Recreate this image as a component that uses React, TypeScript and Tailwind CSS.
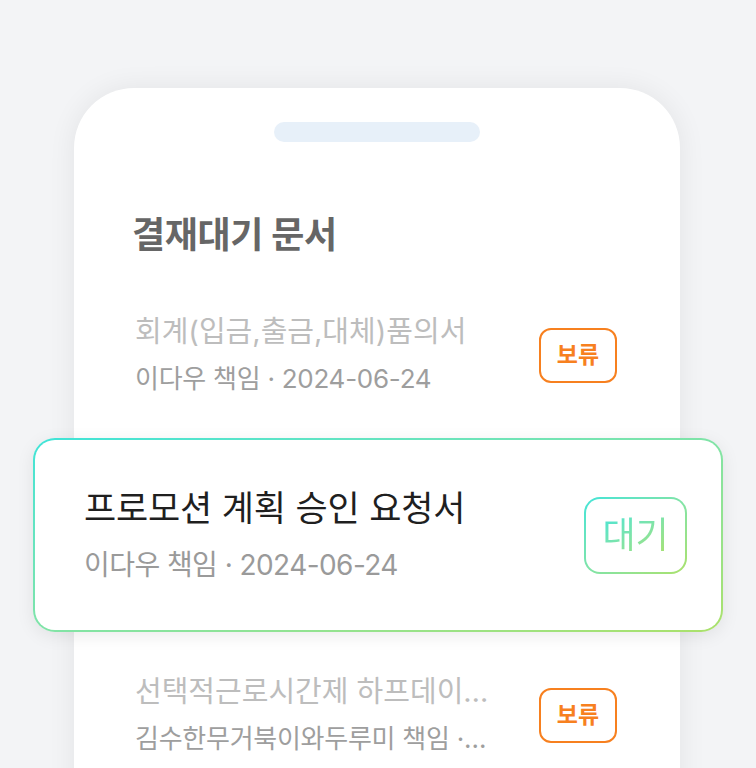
import React from "react";

type Doc = {
  title: string;
  meta: string;
};

const rows: Doc[] = [
  { title: "회계(입금,출금,대체)품의서", meta: "이다우 책임 · 2024-06-24" },
  { title: "프로모션 계획 승인 요청서", meta: "이다우 책임 · 2024-06-24" },
  { title: "선택적근로시간제 하프데이오프 신청서", meta: "김수한무거북이와두루미 책임 · 2024-06-24" },
];

const font = { fontFamily: 'Inter, "Noto Sans CJK KR", sans-serif' };

function HoldBadge() {
  return (
    <div className="flex h-[55px] w-[78px] shrink-0 items-center justify-center rounded-[12px] border-2 border-[#f7801f] text-[23px] font-bold text-[#f7801f]">
      보류
    </div>
  );
}

export default function App() {
  return (
    <div className="h-[768px] w-full overflow-hidden bg-[#f3f4f6]" style={font}>
      <div className="relative ml-[74px] mt-[88px] w-[606px] rounded-t-[60px] bg-white pb-10 shadow-[0_0_28px_rgba(0,0,0,0.07)]">
        <div className="flex justify-center pt-[34px]">
          <div className="h-[20px] w-[206px] rounded-full bg-[#e7f0f9]" />
        </div>

        <h1 className="mt-[72px] pl-[58px] text-[36px] leading-[42px] font-bold tracking-[-0.01em] text-[#666666]">
          결재대기 문서
        </h1>

        <div className="mt-[9px] flex flex-col">
          {rows.map((row, idx) => (
            <div
              key={idx}
              className={`flex h-[180px] items-center justify-between pl-[61px] pr-[63px] ${idx === 1 ? "invisible" : ""}`}
            >
              <div className="flex w-[358px] min-w-0 flex-col gap-[14px] overflow-hidden">
                <p className="truncate text-[29px] leading-[34px] text-[#bdbdbd]">{row.title}</p>
                <p className="truncate text-[26px] leading-[32px] tracking-[-0.01em] text-[#9e9e9e]">{row.meta}</p>
              </div>
              <HoldBadge />
            </div>
          ))}
        </div>

        {/* highlighted row */}
        <div className="absolute left-[-41px] top-[350px] w-[690px] rounded-[22px] bg-gradient-to-br from-[#3ee4d8] to-[#abe16a] p-[2px] shadow-[0_4px_18px_rgba(0,0,0,0.08)]">
          <div className="flex h-[190px] items-center justify-between rounded-[20px] bg-white pl-[49px] pr-[34px]">
            <div className="flex flex-col gap-[20px]">
              <p className="text-[35px] leading-[40px] tracking-[-0.005em] text-[#1f1f1f]">{rows[1].title}</p>
              <p className="text-[28px] leading-[34px] tracking-[-0.02em] text-[#9a9a9a]">{rows[1].meta}</p>
            </div>
            <div className="rounded-[16px] bg-gradient-to-br from-[#3ee4d8] to-[#abe16a] p-[2px]">
              <div className="flex h-[73px] w-[99px] items-center justify-center rounded-[14px] bg-white">
                <span className="bg-gradient-to-br from-[#3ee4d8] to-[#abe16a] bg-clip-text text-[36px] leading-[42px] text-transparent">
                  대기
                </span>
              </div>
            </div>
          </div>
        </div>
      </div>
    </div>
  );
}
